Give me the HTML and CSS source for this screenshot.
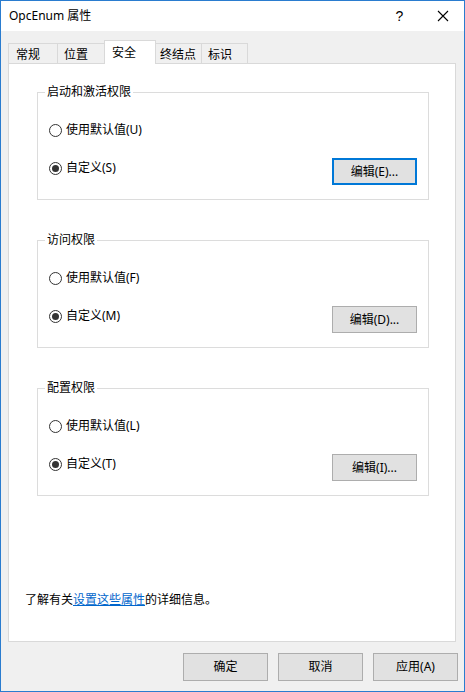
FILE: index.html
```html
<!DOCTYPE html>
<html lang="zh-CN">
<head>
<meta charset="utf-8">
<title>OpcEnum 属性</title>
<link rel="stylesheet" href="styles.css">
</head>
<body>
<div class="window">
  <div class="titlebar">
    <span class="title">OpcEnum 属性</span>
    <span class="cap cap-help">?</span>
    <span class="cap cap-close">
      <svg width="12" height="12" viewBox="0 0 12 12"><path d="M1 1 L11 11 M11 1 L1 11" stroke="#000" stroke-width="1.1" fill="none"/></svg>
    </span>
  </div>
  <div class="content">
    <div class="tabs">
      <div class="tab t1">常规</div>
      <div class="tab t2">位置</div>
      <div class="tab active">安全</div>
      <div class="tab t4">终结点</div>
      <div class="tab t5">标识</div>
    </div>
    <div class="panel">
      <fieldset class="group">
        <legend>启动和激活权限</legend>
        <div class="radio"><span class="dot"></span>使用默认值(U)</div>
        <div class="row">
          <div class="radio on"><span class="dot"></span>自定义(S)</div>
          <button class="btn focus">编辑(E)...</button>
        </div>
      </fieldset>
      <fieldset class="group">
        <legend>访问权限</legend>
        <div class="radio"><span class="dot"></span>使用默认值(F)</div>
        <div class="row">
          <div class="radio on"><span class="dot"></span>自定义(M)</div>
          <button class="btn">编辑(D)...</button>
        </div>
      </fieldset>
      <fieldset class="group">
        <legend>配置权限</legend>
        <div class="radio"><span class="dot"></span>使用默认值(L)</div>
        <div class="row">
          <div class="radio on"><span class="dot"></span>自定义(T)</div>
          <button class="btn">编辑(I)...</button>
        </div>
      </fieldset>
      <p class="info">了解有关<a class="link" href="#">设置这些属性</a>的详细信息。</p>
    </div>
    <div class="footer">
      <button class="btn">确定</button>
      <button class="btn">取消</button>
      <button class="btn">应用(A)</button>
    </div>
  </div>
</div>
</body>
</html>
```
FILE: styles.css
```css
* { box-sizing: border-box; }
html, body { margin: 0; padding: 0; }
body {
  width: 465px;
  height: 692px;
  font-family: "Noto Sans", "Noto Sans CJK SC", sans-serif;
  font-size: 12px;
  color: #000;
  background: #fff;
}
.window {
  width: 465px;
  height: 692px;
  border: 1px solid #2a7ccf;
  background: #f0f0f0;
  display: flex;
  flex-direction: column;
}
.titlebar {
  height: 30px;
  background: #fff;
  display: flex;
  align-items: center;
  padding-left: 8px;
  flex: none;
}
.title { font-size: 12px; line-height: 16px; }
.cap {
  width: 43px;
  height: 30px;
  display: flex;
  align-items: center;
  justify-content: center;
}
.cap-help { margin-left: auto; font-size: 14px; font-family: "Liberation Sans", sans-serif; }
.content {
  flex: 1;
  display: flex;
  flex-direction: column;
  padding: 9px 8px 0 7px;
}
.tabs {
  display: flex;
  align-items: flex-end;
  height: 24px;
  position: relative;
  z-index: 1;
}
.tab {
  height: 20px;
  margin-bottom: 1px;
  border: 1px solid #d9d9d9;
  border-bottom: none;
  background: #f0f0f0;
  line-height: 18px;
  padding-top: 2px;
  padding-left: 6px;
  margin-left: -1px;
  white-space: nowrap;
}
.t1 { width: 50px; margin-left: 0; padding-left: 7px; }
.t2 { width: 48px; }
.t4 { width: 47px; padding-left: 4px; }
.t5 { width: 47px; }
.tab.active {
  width: 52px;
  height: 24px;
  margin-bottom: 0;
  background: #fff;
  padding-left: 7px;
  padding-top: 2px;
  line-height: 20px;
}
.panel {
  margin-top: -1px;
  height: 579px;
  border: 1px solid #d9d9d9;
  background: #fff;
  display: flex;
  flex-direction: column;
  padding: 20px 26px 0 16px;
}
.group {
  margin: 0 0 32px 12px;
  padding: 0 11px 14px 11px;
  border: 1px solid #dcdcdc;
  min-width: 0;
}
.group legend {
  padding: 0 2px;
  margin-left: -4px;
  line-height: 16px;
}
.radio {
  display: flex;
  align-items: center;
  height: 16px;
  line-height: 16px;
  margin-top: 22px;
}
.dot {
  width: 13px;
  height: 13px;
  border: 1px solid #333;
  border-radius: 50%;
  margin-right: 4px;
  display: flex;
  align-items: center;
  justify-content: center;
  flex: none;
}
.radio.on .dot::after {
  content: "";
  width: 7px;
  height: 7px;
  border-radius: 50%;
  background: #333;
}
.row {
  display: flex;
  align-items: flex-start;
  justify-content: space-between;
  margin-top: 20px;
}
.row .radio { margin-top: 2px; }
.btn {
  width: 85px;
  height: 27px;
  border: 1px solid #adadad;
  background: #e1e1e1;
  font-family: inherit;
  font-size: 12px;
  color: #000;
  padding: 0;
  line-height: 16px;
}
.btn.focus { border: 2px solid #0078d7; }
.info {
  margin: auto 0 33px 0;
  line-height: 16px;
}
.link { color: #0066cc; text-decoration: underline; }
.footer {
  display: flex;
  justify-content: flex-end;
  gap: 10px;
  padding-top: 11px;
  margin-right: -2px;
}
.footer .btn { height: 28px; }
```
